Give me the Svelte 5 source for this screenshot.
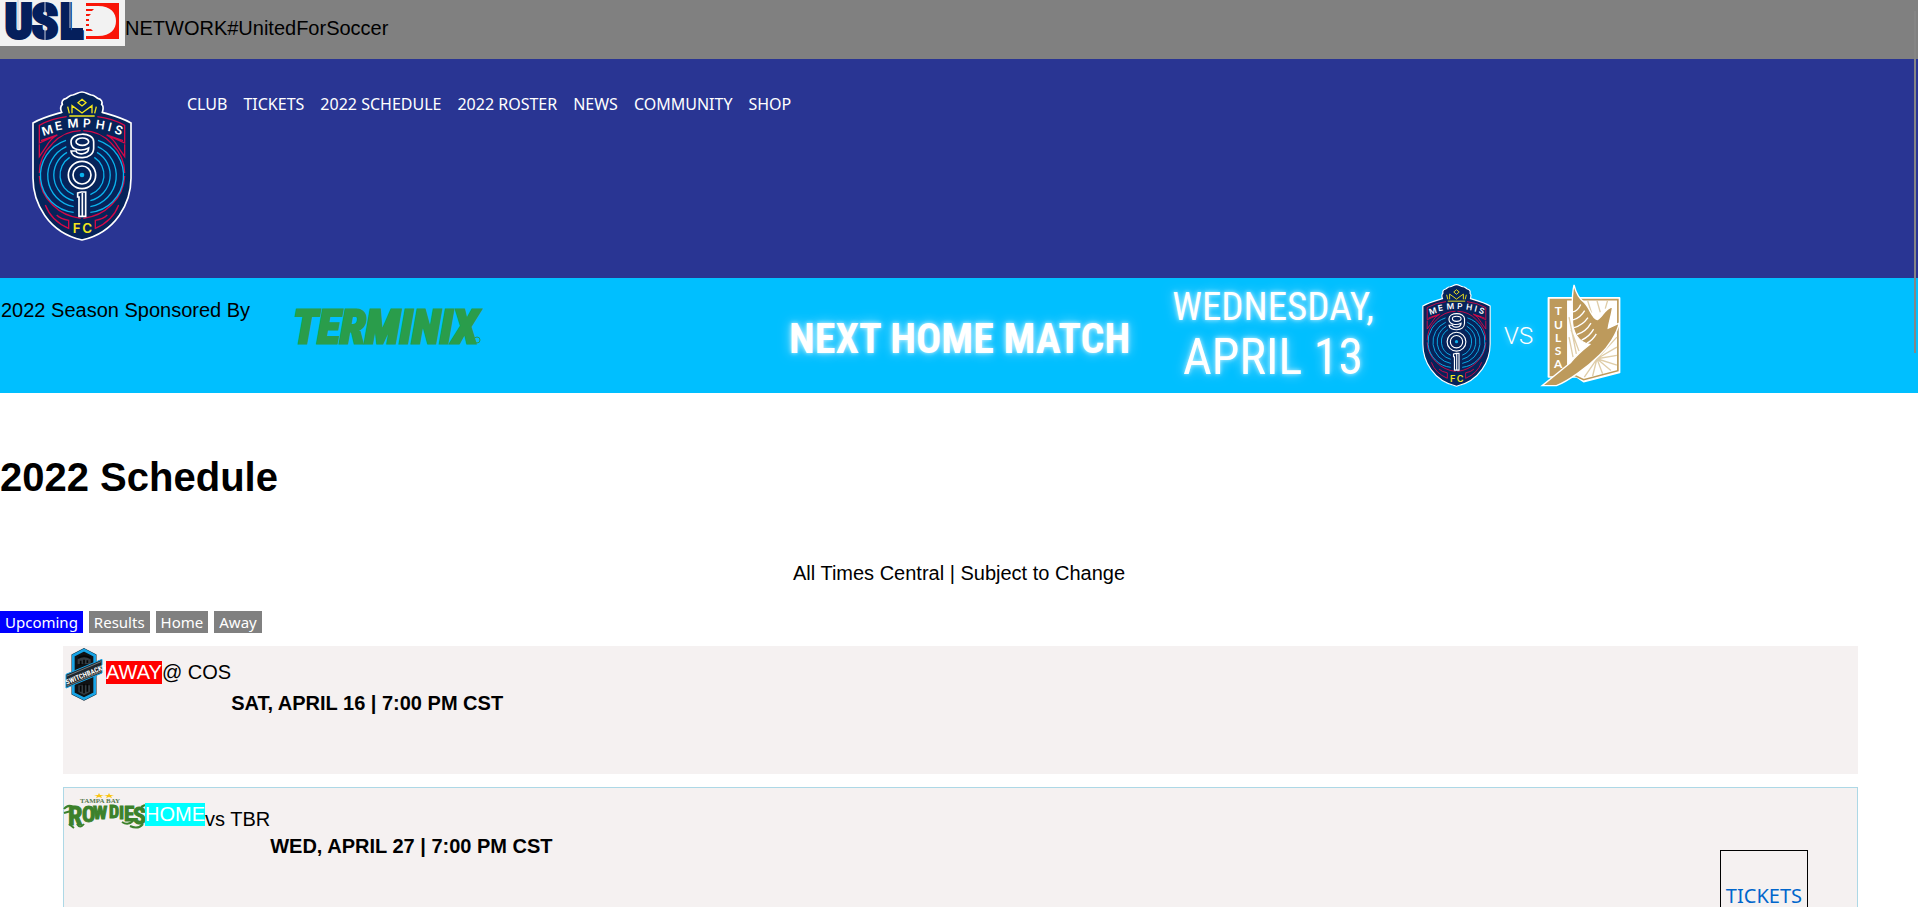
<script>
  const links = ['CLUB', 'TICKETS', '2022 SCHEDULE', '2022 ROSTER', 'NEWS', 'COMMUNITY', 'SHOP'];
  const tabs = ['Upcoming', 'Results', 'Home', 'Away'];
  let active = $state('Upcoming');
</script>

{#snippet crest(cls)}
  <svg class={cls} viewBox="0 0 300 450" role="img" aria-label="Memphis 901 FC">
    <path d="M150 3C160 3 168 10 178 12C187 12 190 18 197 22C209 25 212 33 209 40C217 47 213 55 211 64C238 72 270 80 297 96V262C297 335 252 424 150 447C48 424 3 335 3 262V96C30 80 62 72 89 64C85 55 84 47 91 40C88 33 91 25 103 22C110 18 113 12 122 12C132 10 140 3 150 3Z" fill="#06235a" stroke="#fff" stroke-width="5" />
    <g fill="none" stroke="#f2e61c" stroke-width="4">
      <path d="M112 75H188M107 47L112 67M193 47L188 67M120 67V44L150 66L180 44V67M150 25L162 35L150 45L138 35Z" />
    </g>
    <g fill="none" stroke="#d20a48" stroke-width="4">
      <path d="M104 77Q60 82 22 103V156L76 132M22 160V197L42 168Q56 142 76 132L27 149M42 143L62 139" />
      <path d="M196 77Q240 82 278 103V156L224 132M278 160V197L258 168Q244 142 224 132L273 149M258 143L238 139" />
      <path d="M146 119Q96 120 61 158Q22 196 22 246M154 119Q204 120 239 158Q278 196 278 246M22 255Q24 306 62 342Q96 376 146 382M278 255Q276 306 238 342Q204 376 154 382" />
      <path d="M40 342Q58 390 110 412V388Q86 384 74 372M260 342Q242 390 190 412V388Q214 384 226 372" />
    </g>
    <g fill="none" stroke="#0bb2ed" stroke-width="4">
      <path d="M102 148A111 111 0 0 0 125 364M103 167A95 95 0 0 0 125 347M105 184A79 79 0 0 0 125 329M113 199A63 63 0 0 0 125 311" />
      <path d="M198 148A111 111 0 0 1 175 364M197 167A95 95 0 0 1 175 347M195 184A79 79 0 0 1 175 329M187 199A63 63 0 0 1 175 311" />
    </g>
    <g fill="none" stroke="#fff" stroke-width="5">
      <circle cx="150" cy="252" r="41" />
      <circle cx="150" cy="252" r="27" />
      <path d="M185 152C185 122 117 122 117 153C117 180 151 181 170 171C170 192 135 193 132 180H117C120 208 185 208 185 172Z" />
      <ellipse cx="151" cy="152" rx="19" ry="11" />
      <path d="M137 306L148 303H161V376H141V318H137ZM151 306V374" />
    </g>
    <circle cx="150" cy="252" r="7" fill="#0bb2ed" />
    <text class="crest-text" x="34 71 107 152 190 226 245" y="135 119 111 109 112 119 126" rotate="-17 -11 -4 3 9 14 18" fill="#fff" font-size="36">MEMPHIS</text>
    <text class="crest-text" x="122 151" y="426" fill="#f2e61c" font-size="40">FC</text>
  </svg>
{/snippet}

<div class="page">
  <header>
    <div class="network">
      <svg class="usl" viewBox="0 0 125 46" role="img" aria-label="USL">
        <rect width="125" height="46" fill="#f2f2f2" />
        <text class="narrow" x="5 32 60" y="38" font-size="48" fill="#051f5c" stroke="#051f5c" stroke-width="4">USL</text>
        <path d="M18 0V29M45 2V13M45 28V40M70 2V28" stroke="#c3c9d8" stroke-width="1" />
        <path d="M72 28H83V39H72Z" fill="#051f5c" />
        <path fill="#f91507" fill-rule="evenodd" d="M86 3H119V39H86V36H98C111 36 116 29 116 21C116 13 111 6 98 6H86ZM86 9H94L92 11H86ZM86 14H91L89 16H86ZM86 19H89V21H86ZM86 24H89V26H86ZM86 29H91L93 31H86Z" />
      </svg>
      <p>NETWORK#UnitedForSoccer</p>
    </div>
    <div class="main-nav">
      {@render crest('crest')}
      <nav>
        {#each links as link}<a href="#top">{link}</a>{/each}
      </nav>
    </div>
  </header>

  <section class="banner">
    <p>2022 Season Sponsored By</p>
    <svg class="terminix" viewBox="0 0 196 42" role="img" aria-label="Terminix">
      <text class="narrow" x="0" y="38" font-size="47" font-style="italic" fill="#2a9d4b" stroke="#2a9d4b" stroke-width="3">TERMINIX</text>
      <circle cx="184" cy="35" r="3" fill="none" stroke="#2a9d4b" stroke-width="1" />
    </svg>
    <strong class="next">NEXT HOME MATCH</strong>
    <div class="date"><span>WEDNESDAY,</span><span class="day">APRIL 13</span></div>
    <div class="teams">
      {@render crest('crest-small')}
      <span>VS</span>
      <svg class="tulsa" viewBox="0 0 240 310" role="img" aria-label="FC Tulsa">
        <path d="M22 42H236V266L128 294L108 280H22Z" fill="#fff" stroke="#fff" stroke-width="5" stroke-linejoin="round" />
        <path d="M28 47H231V261L128 288L100 275H28Z" fill="#fff" stroke="#bd9a5c" stroke-width="5" />
        <path d="M28 47H78V275H28Z" fill="#bd9a5c" />
        <path d="M96 220L84 160M106 210L84 100M114 202L90 138M140 50L152 88M168 50L178 85M200 50L193 74M168 225L228 160M168 225L228 190M168 225L228 215M168 225L228 244M168 225L210 260M168 225L185 270M168 225L155 277M168 225L130 280" fill="none" stroke="#dfcda8" stroke-width="4" />
        <path d="M99 3C106 32 116 43 130 56C148 74 153 104 169 107C185 100 190 75 215 69C213 92 205 111 202 133L235 118C228 151 201 190 176 214C139 251 80 293 46 306H3L88 237C105 216 123 200 146 182C113 175 93 147 94 104C95 75 90 38 99 3Z" fill="#bd9a5c" stroke="#fff" stroke-width="4" />
        <path d="M96 84Q110 82 119 62M96 108Q118 102 131 80M99 131Q125 124 141 101M108 152Q135 144 150 118M122 169Q146 158 158 136M138 178Q156 168 166 150" stroke="#fff" stroke-width="4" fill="none" />
        <text class="tulsa-text" x="41 39 42 41 39" y="92 134 174 214 253" font-size="36" fill="#fff">TULSA</text>
      </svg>
    </div>
  </section>

  <main>
    <h1>2022 Schedule</h1>
    <p class="note">All Times Central | Subject to Change</p>
    <div class="tabs">
      {#each tabs as tab}
        <button type="button" class:active={active === tab} onclick={() => (active = tab)}>{tab}</button>
      {/each}
    </div>

    <div class="games">
      <article class="away">
        <svg class="switchbacks" viewBox="0 0 114 156" role="img" aria-label="Switchbacks">
          <path d="M57 6L89 23V136L57 152L25 136V23Z" fill="#101214" stroke="#12202a" stroke-width="11" />
          <path d="M57 6L89 23V136L57 152L25 136V23Z" fill="#101214" stroke="#18a4e6" stroke-width="8" />
          <path d="M38 34Q57 22 77 34V48H38ZM40 112H75V132L57 141L40 132Z" fill="#333c42" />
          <path d="M40 29Q57 20 75 29M47 38V51M57 35V47M67 37V45M47 113V131M57 108V136M67 108V131" stroke="#050607" stroke-width="5" fill="none" />
          <path d="M3 79L111 34V75L3 120Z" fill="#20262b" stroke="#18a4e6" stroke-width="3" />
          <path d="M6 84L108 41M6 114L108 71" stroke="#9ca5aa" stroke-width="2" />
          <text class="narrow" x="5" y="110" font-size="21" fill="#fff" transform="rotate(-22 5 110)">SWITCHBACKS</text>
        </svg>
        <span class="badge">AWAY</span>
        <p class="opponent">@ COS</p>
        <h2>SAT, APRIL 16 | 7:00 PM CST</h2>
      </article>

      <article class="home">
        <svg class="rowdies" viewBox="0 0 81 36" role="img" aria-label="Tampa Bay Rowdies">
          <path d="M35 0L36 2H40L37 3L38 5L35 4L32 5L33 3L30 2H34ZM45 0L46 2H50L47 3L48 5L45 4L42 5L43 3L40 2H44Z" fill="#f9c414" />
          <text class="deco" x="16" y="10" font-size="7" fill="#58794e">TAMPA BAY</text>
          <g class="narrow" fill="#3c812b" stroke="#3c812b" stroke-width="1">
            <text x="4" y="32" font-size="26">R<tspan x="18" y="29" font-size="22">O</tspan><tspan x="29" y="26" font-size="19">W</tspan><tspan x="45" y="25" font-size="18">D</tspan><tspan x="55" y="26" font-size="19">I</tspan><tspan x="60" y="28" font-size="21">E</tspan><tspan x="69" y="31" font-size="24">S</tspan></text>
          </g>
          <path d="M0 16Q4 11 9 14M0 20L7 18M5 31L10 35M13 31Q16 36 20 31M77 14L81 12M58 29Q64 33 69 28M66 33Q74 37 79 31" fill="none" stroke="#3c812b" stroke-width="2" />
        </svg>
        <span class="badge">HOME</span>
        <p class="opponent">vs TBR</p>
        <h2>WED, APRIL 27 | 7:00 PM CST</h2>
        <a class="buy" href="#tickets">TICKETS</a>
      </article>
    </div>
  </main>
  <div class="scroll-thumb"></div>
</div>

<style>
  :global(body) { margin: 0; }
  .page {
    height: 100vh;
    overflow-y: auto;
    scrollbar-width: none;
    background: #fff;
    color: #000;
    font: 20px/23px "Liberation Sans", Arial, sans-serif;
  }
  p, h1, h2 { margin: 0; }
  svg { display: block; flex: none; overflow: visible; }
  .network { display: flex; align-items: flex-start; background: #808080; padding-bottom: 13px; }
  .network p { padding-top: 17px; }
  .usl { width: 125px; height: 46px; }
  .main-nav { display: flex; align-items: flex-start; background: #293593; padding: 32px 32px 37px; }
  .crest { width: 100px; height: 150px; }
  nav { display: flex; gap: 16px; margin-left: 55px; }
  nav a { color: #fff; font: 16px/26px "Noto Sans", Tahoma, sans-serif; text-decoration: none; }
  .banner { display: flex; align-items: flex-start; height: 115px; background: #00bfff; white-space: nowrap; }
  .banner p { padding: 21px 0 0 1px; }
  .terminix { width: 196px; height: 42px; margin: 27px 0 0 43px; }
  .next, .date {
    color: #fff;
    font-family: "Roboto Condensed", "Liberation Sans Narrow", "Liberation Sans", sans-serif;
    text-shadow: 0 0 4px #ffffffb0, 0 0 12px #ffffff90;
  }
  .next { width: 343px; margin: 36px 0 0 300px; font-size: 42px; line-height: 50px; }
  .date { display: flex; flex-direction: column; align-items: center; width: 200px; margin: 6px 0 0 41px; font-size: 39px; line-height: 46px; }
  .date .day { font-size: 50px; line-height: 54px; }
  .teams { display: flex; align-items: center; gap: 12px; margin: 6px 0 0 48px; }
  .teams span { color: #fff; font: 300 24px/28px Roboto, "Liberation Sans", sans-serif; text-shadow: 0 0 6px #ffffff80; }
  .crest-small { width: 71px; height: 103px; }
  .tulsa { width: 80px; height: 103px; margin-left: -4px; }
  h1 { padding-top: 61px; font-size: 40px; line-height: 46px; }
  .note { padding-top: 62px; text-align: center; }
  .tabs { display: flex; gap: 6px; padding: 26px 0 13px; }
  .tabs button { border: 0; padding: 0 5px; color: #fff; background: #808080; font: 15px/22px "Noto Sans", Tahoma, sans-serif; }
  .tabs button.active { background: #00f; }
  .games { display: flex; flex-direction: column; gap: 13px; padding: 0 60px 0 63px; }
  article { display: flex; align-items: flex-start; background: #f5f1f1; }
  h2 { font-size: 20px; line-height: 23px; }
  .badge { color: #fff; background: #f00; }
  .away { height: 128px; }
  .switchbacks { width: 38px; height: 52px; margin: 2px 3px 0 2px; }
  .away .badge, .away .opponent { margin-top: 15px; }
  .away h2 { margin-top: 46px; }
  .home { height: 220px; border: 1px solid #add8e6; }
  .rowdies { width: 81px; height: 36px; margin-top: 5px; }
  .home .badge { margin-top: 15px; background: #0ff; }
  .home .opponent { margin-top: 20px; }
  .home h2 { margin-top: 47px; }
  .buy { margin: 62px 49px 0 auto; border: 1px solid #000; padding: 32px 5px; color: #06c; font: 20px/26px "Noto Sans", Tahoma, sans-serif; text-decoration: none; }
  .narrow { font-family: "Roboto Condensed", "Liberation Sans Narrow", "Liberation Sans", sans-serif; font-weight: 700; }
  .crest-text { font-family: Inter, sans-serif; font-weight: 600; }
  .tulsa-text { font-family: Lato, sans-serif; font-weight: 700; }
  .deco { font-family: "Liberation Serif", serif; font-weight: 700; }
  .scroll-thumb { position: fixed; top: 11px; right: 2px; width: 2px; height: 342px; background: #858585; }
</style>
